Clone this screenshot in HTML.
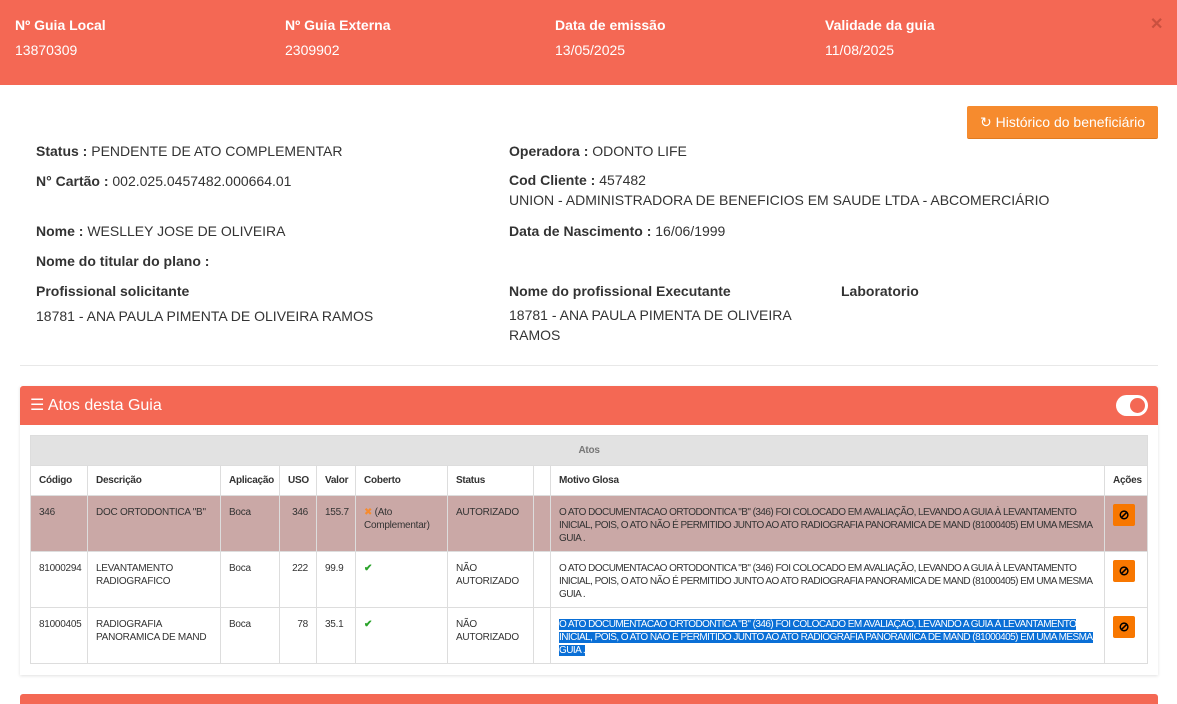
<!DOCTYPE html>
<html><head><meta charset="utf-8"><style>
*{box-sizing:border-box;margin:0;padding:0}
body{width:1177px;height:701px;overflow:hidden;background:#fff;font-family:"Liberation Sans",Arial,sans-serif;color:#333;position:relative}
.top{position:absolute;left:0;top:0;width:1177px;height:85px;background:#f46854;color:#fff}
.top div{position:absolute;top:17px;font-size:14px}
.top b{display:block;margin-bottom:9px}
.x{position:absolute;left:1150px;top:14px;font-size:16px;font-weight:bold;color:#c9503f}
.btn{position:absolute;left:967px;top:106px;width:191px;height:33px;background:#f68b2e;border-radius:2px;color:#fff;font-size:14px;line-height:33px;text-align:center;border-bottom:1px solid #e07a20}
.t{position:absolute;font-size:14px;color:#333}
.t b{font-weight:bold}
hr{position:absolute;left:20px;top:365px;width:1138px;border:0;border-top:1px solid #e8e8e8}
.panel{position:absolute;left:20px;top:386px;width:1138px;height:289px;background:#fff;box-shadow:0 1px 3px rgba(0,0,0,.12)}
.ph{height:39px;background:#f46854;color:#fff;font-size:16px;line-height:39px;padding-left:10px;border-radius:3px 3px 0 0}
.tog{position:absolute;right:10px;top:9px;width:32px;height:21px;background:#fff;border-radius:11px}
.tog i{position:absolute;right:3px;top:3px;width:15px;height:15px;border-radius:50%;background:#f46854}
table{position:absolute;left:10px;top:49px;width:1117px;border-collapse:collapse;table-layout:fixed;font-size:10px;color:#333;letter-spacing:-0.25px}
td,th{border:1px solid #ddd;padding:0 8px;vertical-align:top;text-align:left;line-height:13px;overflow:hidden}
td.m{letter-spacing:-0.55px;padding-right:4px}
th{font-weight:bold;height:30px;vertical-align:middle}
.hh th{background:#e2e2e2;color:#777;text-align:center}
tr.r td{height:56px;padding-top:10px}
tr.p td{background:#caa8a6}
.ac{width:22px;height:22px;background:#f87700;border-radius:2px;display:inline-block;color:#000;text-align:center;line-height:22px;font-size:13px;font-weight:bold}
.sel{background:#0a6fd6;color:#fff}
.ok{color:#2aa32a;font-weight:bold}
.bot{position:absolute;left:20px;top:694px;width:1138px;height:10px;background:#f46854;border-radius:3px 3px 0 0}
</style></head><body>
<div class="top">
<div style="left:15px"><b>Nº Guia Local</b>13870309</div>
<div style="left:285px"><b>Nº Guia Externa</b>2309902</div>
<div style="left:555px"><b>Data de emissão</b>13/05/2025</div>
<div style="left:825px"><b>Validade da guia</b>11/08/2025</div>
<span class="x">✕</span>
</div>
<div class="btn">↻ Histórico do beneficiário</div>
<div class="t" style="left:36px;top:143px"><b>Status :</b> PENDENTE DE ATO COMPLEMENTAR</div>
<div class="t" style="left:509px;top:143px"><b>Operadora :</b> ODONTO LIFE</div>
<div class="t" style="left:36px;top:173px"><b>N° Cartão :</b> 002.025.0457482.000664.01</div>
<div class="t" style="left:509px;top:170px;line-height:20px"><b>Cod Cliente :</b> 457482<br>UNION - ADMINISTRADORA DE BENEFICIOS EM SAUDE LTDA - ABCOMERCIÁRIO</div>
<div class="t" style="left:36px;top:223px"><b>Nome :</b> WESLLEY JOSE DE OLIVEIRA</div>
<div class="t" style="left:509px;top:223px"><b>Data de Nascimento :</b> 16/06/1999</div>
<div class="t" style="left:36px;top:253px"><b>Nome do titular do plano :</b></div>
<div class="t" style="left:36px;top:283px"><b>Profissional solicitante</b></div>
<div class="t" style="left:509px;top:283px"><b>Nome do profissional Executante</b></div>
<div class="t" style="left:841px;top:283px"><b>Laboratorio</b></div>
<div class="t" style="left:36px;top:308px">18781 - ANA PAULA PIMENTA DE OLIVEIRA RAMOS</div>
<div class="t" style="left:509px;top:305px;line-height:20px;width:320px">18781 - ANA PAULA PIMENTA DE OLIVEIRA RAMOS</div>
<hr>
<div class="panel">
<div class="ph">☰ Atos desta Guia<div class="tog"><i></i></div></div>
<table>
<colgroup><col style="width:57px"><col style="width:133px"><col style="width:59px"><col style="width:37px"><col style="width:39px"><col style="width:92px"><col style="width:86px"><col style="width:17px"><col style="width:554px"><col style="width:43px"></colgroup>
<tr class="hh"><th colspan="10">Atos</th></tr>
<tr><th>Código</th><th>Descrição</th><th>Aplicação</th><th>USO</th><th>Valor</th><th>Coberto</th><th>Status</th><th></th><th>Motivo Glosa</th><th>Ações</th></tr>
<tr class="r p"><td>346</td><td>DOC ORTODONTICA "B"</td><td>Boca</td><td style="text-align:right">346</td><td>155.7</td><td><span style="color:#f68b2e">✖</span> (Ato Complementar)</td><td>AUTORIZADO</td><td></td><td class="m">O ATO DOCUMENTACAO ORTODONTICA "B" (346) FOI COLOCADO EM AVALIAÇÃO, LEVANDO A GUIA À LEVANTAMENTO INICIAL, POIS, O ATO NÃO É PERMITIDO JUNTO AO ATO RADIOGRAFIA PANORAMICA DE MAND (81000405) EM UMA MESMA GUIA .</td><td style="padding-top:8px"><span class="ac">⊘</span></td></tr>
<tr class="r"><td>81000294</td><td>LEVANTAMENTO RADIOGRAFICO</td><td>Boca</td><td style="text-align:right">222</td><td>99.9</td><td class="ok">✔</td><td>NÃO AUTORIZADO</td><td></td><td class="m">O ATO DOCUMENTACAO ORTODONTICA "B" (346) FOI COLOCADO EM AVALIAÇÃO, LEVANDO A GUIA À LEVANTAMENTO INICIAL, POIS, O ATO NÃO É PERMITIDO JUNTO AO ATO RADIOGRAFIA PANORAMICA DE MAND (81000405) EM UMA MESMA GUIA .</td><td style="padding-top:8px"><span class="ac">⊘</span></td></tr>
<tr class="r"><td>81000405</td><td>RADIOGRAFIA PANORAMICA DE MAND</td><td>Boca</td><td style="text-align:right">78</td><td>35.1</td><td class="ok">✔</td><td>NÃO AUTORIZADO</td><td></td><td class="m"><span class="sel">O ATO DOCUMENTACAO ORTODONTICA "B" (346) FOI COLOCADO EM AVALIAÇÃO, LEVANDO A GUIA À LEVANTAMENTO INICIAL, POIS, O ATO NÃO É PERMITIDO JUNTO AO ATO RADIOGRAFIA PANORAMICA DE MAND (81000405) EM UMA MESMA GUIA .</span></td><td style="padding-top:8px"><span class="ac">⊘</span></td></tr>
</table>
</div>
<div class="bot"></div>
</body></html>
